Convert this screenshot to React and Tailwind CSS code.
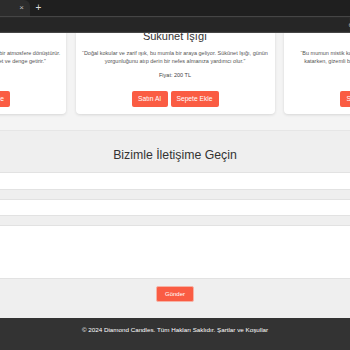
import React from "react";

function Card({ title, lines, price }) {
  return (
    <div className="w-[199px] shrink-0 bg-white rounded-[4px] shadow-[0_1px_3px_rgba(0,0,0,0.12)] px-[6px] pt-[0px] pb-[7px] text-center">
      <h3 className="text-[11px] leading-[13px] text-[#333]">{title}</h3>
      <p className="mt-[6px] text-[5.5px] leading-[8px] text-[#555] whitespace-nowrap">
        {lines[0]}
        <br />
        {lines[1]}
      </p>
      <p className="mt-[6px] text-[5.5px] leading-[8px] text-[#444]">{price}</p>
      <div className="mt-[11.7px] flex justify-center gap-[3px]">
        <button className="h-[16.6px] w-[36px] rounded-[2px] bg-[#fa5c43] text-white text-[6.7px]">Satın Al</button>
        <button className="h-[16.6px] w-[48px] rounded-[2px] bg-[#fa5c43] text-white text-[6.7px]">Sepete Ekle</button>
      </div>
    </div>
  );
}

export default function App() {
  return (
    <div className="w-[350px] h-[350px] overflow-hidden bg-[#f4f4f4] font-['Liberation_Sans',Arial,sans-serif]">
      {/* browser chrome */}
      <div className="h-[16px] bg-[#1f1f1f] flex items-stretch">
        <div className="w-[30px] bg-[#2c2c2c] rounded-tr-[6px] flex items-center justify-end pr-[6px]">
          <span className="text-[#bbb] text-[8px] leading-none">×</span>
        </div>
        <div className="w-[17px] flex items-center justify-center">
          <span className="text-[#ddd] text-[10px] leading-none">+</span>
        </div>
      </div>
      <div className="h-[17px] bg-[#2a2a2a] border-t border-b border-[#454545] flex items-center">
        <div className="flex-1 h-[13px] bg-[#262626]"></div>
        <span className="text-[#999] text-[8px] leading-none -mr-[3px]">e</span>
      </div>

      {/* page viewport */}
      <div className="h-[317px] overflow-hidden">
        <div className="-mt-[3px] flex justify-center gap-[9.5px]">
          <Card
            title="Huzur Işığı"
            lines={[
              "“Bu zarif mum, yaşam alanınızı sıcak ve huzur dolu bir atmosfere dönüştürür.",
              "Günün stresini geride bırakarak evinize sükunet ve denge getirir.”",
            ]}
            price="Fiyat: 180 TL"
          />
          <Card
            title="Sükunet Işığı"
            lines={[
              "“Doğal kokular ve zarif ışık, bu mumla bir araya geliyor. Sükûnet Işığı, günün",
              "yorgunluğunu atıp derin bir nefes almanıza yardımcı olur.”",
            ]}
            price="Fiyat: 200 TL"
          />
          <Card
            title="Gizem Işığı"
            lines={[
              "“Bu mumun mistik kokusu ve titrek ışığı, mekanınıza büyülü bir hava",
              "katarken, gizemli bir huzur ortamı yaratarak ruhunuzu dinlendirir.”",
            ]}
            price="Fiyat: 220 TL"
          />
        </div>

        <section className="mt-[16px] bg-[#efefef] border-t border-[#e6e6e6] pt-[17px] pb-[16px]">
          <h2 className="text-center text-[12.3px] leading-[14px] text-[#333]">Bizimle İletişime Geçin</h2>
          <div className="mt-[10px] flex flex-col gap-[9px]">
            <div className="h-[18px] bg-white border-y border-[#e2e2e2]"></div>
            <div className="h-[17px] bg-white border-y border-[#e2e2e2]"></div>
            <div className="h-[54px] bg-white border-y border-[#e2e2e2]"></div>
          </div>
          <div className="mt-[7px] flex justify-center">
            <button className="h-[16px] px-[7.5px] rounded-[2px] bg-[#fa5c43] border border-[#f6b3a6] text-white text-[6px]">Gönder</button>
          </div>
        </section>

        <footer className="h-[40px] bg-[#333] pt-[7px] text-center">
          <p className="text-[6.25px] leading-[10px] text-white">
            © 2024 Diamond Candles. Tüm Hakları Saklıdır. <a className="text-white">Şartlar ve Koşullar</a>
          </p>
        </footer>
      </div>
    </div>
  );
}
